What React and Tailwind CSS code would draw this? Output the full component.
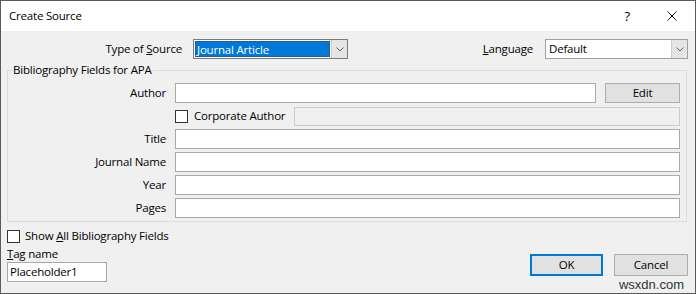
import React from "react";

function Chevron() {
  return (
    <svg width="8" height="5" viewBox="0 0 8 5" fill="none">
      <path d="M0.5 0.5 L4 4 L7.5 0.5" stroke="#606060" strokeWidth="1" />
    </svg>
  );
}

function Combo({ value, focused, className }) {
  return (
    <div
      className={`flex h-[20px] border bg-white ${
        focused ? "border-[#7a7a7a]" : "border-[#a0a0a0]"
      } ${className}`}
    >
      <div className="flex-1 p-[1px]">
        {focused ? (
          <div className="h-full border border-dotted border-[#444] bg-[#0078d7] pl-[1px] leading-[15px] text-white">
            {value}
          </div>
        ) : (
          <div className="h-full pl-[2px] leading-[16px]">{value}</div>
        )}
      </div>
      <div className="flex w-[16px] items-center justify-center border-l border-[#cfcfcf] bg-[#e5e5e5]">
        <Chevron />
      </div>
    </div>
  );
}

function Box() {
  return <div className="h-[13px] w-[13px] shrink-0 border border-[#333] bg-white" />;
}

function Field({ label, children }) {
  return (
    <div className="flex h-[20px] items-center">
      <div className="w-[158px] text-right">{label}</div>
      <div className="ml-[9px] flex h-full flex-1">{children}</div>
    </div>
  );
}

function TextBox({ className = "" }) {
  return <div className={`h-full flex-1 border border-[#a9a9a9] bg-white ${className}`} />;
}

export default function App() {
  const fields = ["Title", "Journal Name", "Year", "Pages"];

  return (
    <div
      className="flex h-[294px] w-[696px] flex-col border border-[#5a5a5a] text-[11.5px] leading-[16px] tracking-[-0.2px] text-black"
      style={{ fontFamily: '"Open Sans", "Noto Sans", sans-serif' }}
    >
      {/* title bar */}
      <div className="flex h-[30px] shrink-0 items-center bg-white pl-[8px]">
        <span className="pb-[1px]">Create Source</span>
        <span className="ml-auto mr-[37px] text-[13px]">?</span>
        <svg className="mr-[18px]" width="10" height="10" viewBox="0 0 10 10">
          <path d="M0.5 0.5 L9.5 9.5 M9.5 0.5 L0.5 9.5" stroke="#111" strokeWidth="1" />
        </svg>
      </div>

      <div className="flex flex-1 flex-col bg-[#f0f0f0]">
        {/* source type / language */}
        <div className="mt-[8px] flex h-[20px] items-center">
          <div className="w-[181px] text-right">
            Type of <u>S</u>ource
          </div>
          <Combo value="Journal Article" focused className="ml-[11px] w-[155px]" />
          <div className="flex-1 text-right">
            <u>L</u>anguage
          </div>
          <Combo value="Default" className="ml-[12px] mr-[7px] w-[143px]" />
        </div>

        {/* group */}
        <fieldset className="ml-[6px] mr-[8px] mt-[3px] border border-[#dcdcdc] pb-[3px] pr-[6px]">
          <legend className="ml-[4px] px-[1px]">Bibliography Fields for APA</legend>
          <div className="mt-[5px] flex flex-col gap-[3px]">
            <Field label="Author">
              <TextBox />
              <button className="ml-[9px] h-full w-[75px] border border-[#adadad] bg-[#e1e1e1]">
                Edit
              </button>
            </Field>
            <Field label="">
              <div className="flex h-full flex-1 items-center">
                <Box />
                <span className="ml-[6px] w-[100px]">Corporate Author</span>
                <div className="h-[19px] flex-1 border border-[#cccccc] bg-[#f0f0f0]" />
              </div>
            </Field>
            {fields.map((f) => (
              <Field key={f} label={f}>
                <TextBox />
              </Field>
            ))}
          </div>
        </fieldset>

        {/* bottom */}
        <div className="flex">
          <div className="ml-[6px] mt-[6px] flex flex-col">
            <div className="flex h-[16px] items-center">
              <Box />
              <span className="ml-[5px]">
                Show <u>A</u>ll Bibliography Fields
              </span>
            </div>
            <div className="mt-[2px]">
              <u>T</u>ag name
            </div>
            <div className="h-[20px] w-[100px] border border-[#a9a9a9] bg-white pl-[2px] leading-[18px]">
              Placeholder1
            </div>
          </div>
          <div className="ml-auto mr-[7px] mt-[32px] flex flex-col">
            <div className="flex gap-[11px]">
              <button className="h-[22px] w-[73px] border-2 border-[#0078d7] bg-[#e1e1e1]">
                OK
              </button>
              <button className="h-[22px] w-[74px] border border-[#adadad] bg-[#e1e1e1]">
                Cancel
              </button>
            </div>
            <div
              className="mt-[1px] pr-[4px] text-right text-[13px] leading-[15px] tracking-normal text-[#333]"
              style={{ fontFamily: '"Liberation Sans", sans-serif' }}
            >
              wsxdn.com
            </div>
          </div>
        </div>
      </div>
    </div>
  );
}
